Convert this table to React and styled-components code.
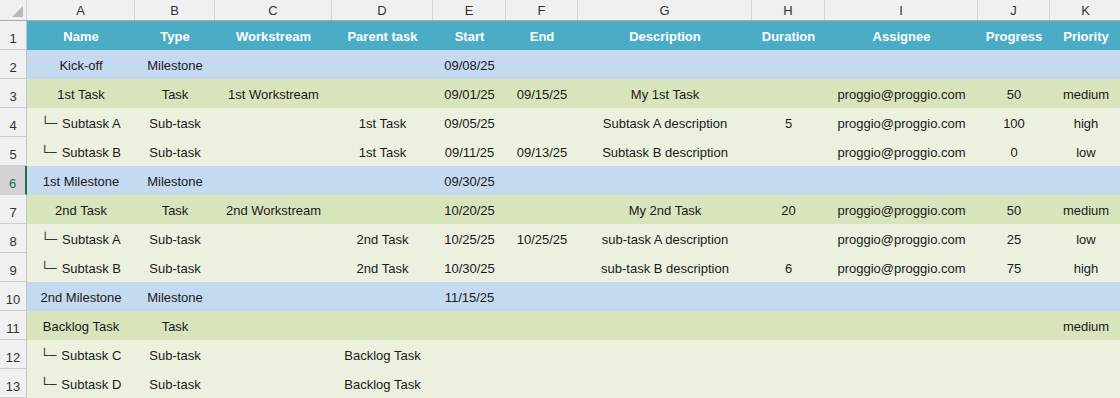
import React from "react";
import styled, { createGlobalStyle } from "styled-components";

const Global = createGlobalStyle`
  html, body { margin: 0; padding: 0; background: #ffffff; overflow: hidden; }
  body { font-family: "Liberation Sans", Arial, sans-serif; }
`;

const COLS = "27px 108px 80px 117px 101px 73px 72px 174px 73px 153px 72px 72px";

const Sheet = styled.div`
  width: 1120px;
  height: 398px;
  overflow: hidden;
  display: flex;
  flex-direction: column;
`;

const ColHeaderRow = styled.div`
  display: grid;
  grid-template-columns: ${COLS};
  height: 21px;
  flex: none;
  background: #f0f0f0;
  border-bottom: 1px solid #ababab;
  box-sizing: border-box;
`;

const Corner = styled.div`
  position: relative;
  border-right: 1px solid #d4d4d4;
  &::after {
    content: "";
    position: absolute;
    right: 3px;
    bottom: 3px;
    width: 0;
    height: 0;
    border-left: 11px solid transparent;
    border-bottom: 11px solid #b9b9b9;
  }
`;

const ColLetter = styled.div`
  display: flex;
  align-items: center;
  justify-content: center;
  font-size: 13px;
  color: #333;
  border-right: 1px solid #d6d6d6;
  padding-top: 1px;
`;

const Row = styled.div`
  display: grid;
  grid-template-columns: ${COLS};
  height: 29px;
  flex: none;
`;

const RowNum = styled.div`
  display: flex;
  align-items: flex-end;
  justify-content: center;
  padding-bottom: 3px;
  box-sizing: border-box;
  font-size: 13px;
  color: ${(p) => (p.$selected ? "#217346" : "#333")};
  background: ${(p) => (p.$selected ? "#d3d3d3" : "#f0f0f0")};
  border-bottom: 1px solid #d0d0d0;
  border-right: ${(p) => (p.$selected ? "2px solid #217346" : "1px solid #c4c4c4")};
`;

const FILLS = {
  header: "#4bacc6",
  milestone: "#c5d9f1",
  task: "#d8e4bc",
  sub: "#ebf1de",
};

const Cell = styled.div`
  display: flex;
  align-items: center;
  justify-content: center;
  white-space: nowrap;
  font-size: 13px;
  background: ${(p) => FILLS[p.$kind]};
  color: ${(p) => (p.$kind === "header" ? "#ffffff" : "#1a1a1a")};
  font-weight: ${(p) => (p.$kind === "header" ? 700 : 400)};
  box-sizing: border-box;
  padding-top: 1px;
`;

const Branch = styled.span`
  font-family: "DejaVu Sans", sans-serif;
  font-size: 13px;
  margin-right: 5px;
  color: #333;
`;

const letters = ["A", "B", "C", "D", "E", "F", "G", "H", "I", "J", "K"];

const rows = [
  ["header", ["Name", "Type", "Workstream", "Parent task", "Start", "End", "Description", "Duration", "Assignee", "Progress", "Priority"]],
  ["milestone", ["Kick-off", "Milestone", "", "", "09/08/25", "", "", "", "", "", ""]],
  ["task", ["1st Task", "Task", "1st Workstream", "", "09/01/25", "09/15/25", "My 1st Task", "", "proggio@proggio.com", "50", "medium"]],
  ["sub", ["Subtask A", "Sub-task", "", "1st Task", "09/05/25", "", "Subtask A description", "5", "proggio@proggio.com", "100", "high"]],
  ["sub", ["Subtask B", "Sub-task", "", "1st Task", "09/11/25", "09/13/25", "Subtask B description", "", "proggio@proggio.com", "0", "low"]],
  ["milestone", ["1st Milestone", "Milestone", "", "", "09/30/25", "", "", "", "", "", ""]],
  ["task", ["2nd Task", "Task", "2nd Workstream", "", "10/20/25", "", "My 2nd Task", "20", "proggio@proggio.com", "50", "medium"]],
  ["sub", ["Subtask A", "Sub-task", "", "2nd Task", "10/25/25", "10/25/25", "sub-task A description", "", "proggio@proggio.com", "25", "low"]],
  ["sub", ["Subtask B", "Sub-task", "", "2nd Task", "10/30/25", "", "sub-task B description", "6", "proggio@proggio.com", "75", "high"]],
  ["milestone", ["2nd Milestone", "Milestone", "", "", "11/15/25", "", "", "", "", "", ""]],
  ["task", ["Backlog Task", "Task", "", "", "", "", "", "", "", "", "medium"]],
  ["sub", ["Subtask C", "Sub-task", "", "Backlog Task", "", "", "", "", "", "", ""]],
  ["sub", ["Subtask D", "Sub-task", "", "Backlog Task", "", "", "", "", "", "", ""]],
];

export default function App() {
  return (
    <>
      <Global />
      <Sheet>
        <ColHeaderRow>
          <Corner />
          {letters.map((l) => (
            <ColLetter key={l}>{l}</ColLetter>
          ))}
        </ColHeaderRow>
        {rows.map(([kind, cells], i) => (
          <Row key={i}>
            <RowNum $selected={i === 5}>{i + 1}</RowNum>
            {cells.map((c, j) => (
              <Cell key={j} $kind={kind}>
                {kind === "sub" && j === 0 ? (
                  <>
                    <Branch>└─</Branch>
                    {c}
                  </>
                ) : (
                  c
                )}
              </Cell>
            ))}
          </Row>
        ))}
      </Sheet>
    </>
  );
}
